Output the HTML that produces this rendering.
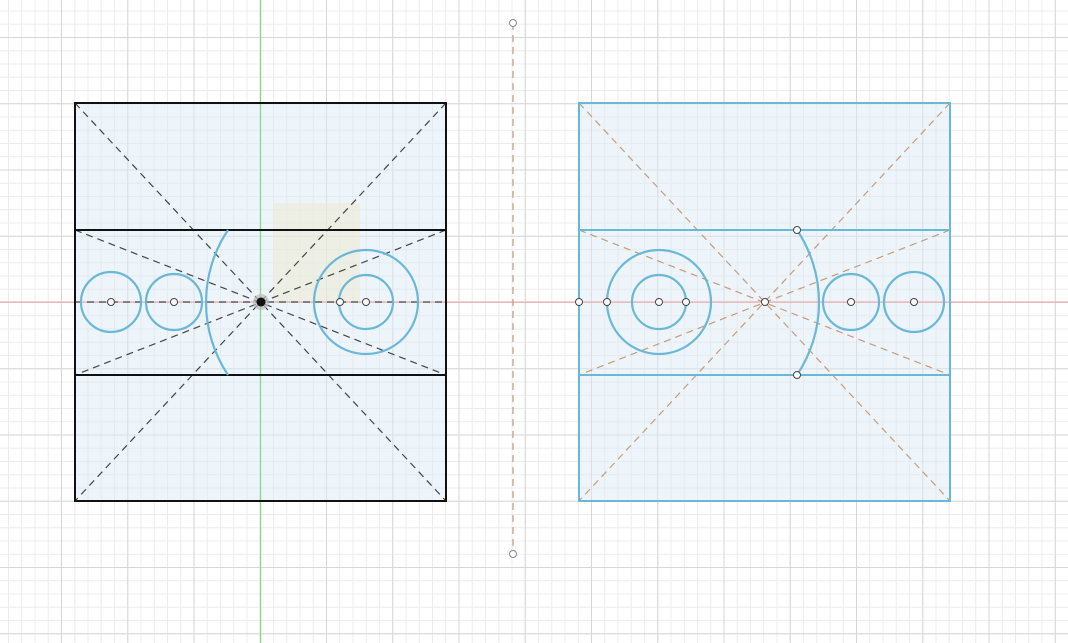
<!DOCTYPE html>
<html><head><style>html,body{margin:0;padding:0;background:#fff}svg{display:block}</style></head>
<body>
<svg width="1068" height="643" xmlns="http://www.w3.org/2000/svg">
<defs>
<pattern id="mn" x="-5.25" y="-2.75" width="13.25" height="13.25" patternUnits="userSpaceOnUse">
<path d="M0 0.5H13.25M0.5 0V13.25" stroke="#ececec" stroke-width="1" fill="none"/>
</pattern>
<pattern id="mj" x="61" y="37" width="66.25" height="66.25" patternUnits="userSpaceOnUse">
<path d="M0 0.5H66.25M0.5 0V66.25" stroke="#d6d6d6" stroke-width="1" fill="none"/>
</pattern>
</defs>
<rect width="1068" height="643" fill="url(#mn)"/>
<rect width="1068" height="643" fill="url(#mj)"/>
<rect x="75" y="103" width="371" height="398" fill="#dcecf8" fill-opacity="0.5"/>
<rect x="579" y="103" width="371" height="398" fill="#dcecf8" fill-opacity="0.5"/>
<rect x="273" y="203" width="87" height="99" fill="#ece9d6" fill-opacity="0.6"/>
<line x1="0" y1="302" x2="1068" y2="302" stroke="#f0a0a0" stroke-width="1"/>
<line x1="260.5" y1="0" x2="260.5" y2="643" stroke="#86dc86" stroke-width="1.3"/>
<g stroke="#444" stroke-width="1.2" stroke-dasharray="7,5" fill="none">
<line x1="75" y1="103" x2="446" y2="501"/>
<line x1="446" y1="103" x2="75" y2="501"/>
<line x1="75" y1="230" x2="446" y2="375"/>
<line x1="446" y1="230" x2="75" y2="375"/>
<line x1="75" y1="302" x2="446" y2="302"/>
</g>
<g stroke="#c89a78" stroke-width="1.2" stroke-dasharray="7,5" fill="none">
<line x1="579" y1="103" x2="950" y2="501"/>
<line x1="950" y1="103" x2="579" y2="501"/>
<line x1="579" y1="230" x2="950" y2="375"/>
<line x1="950" y1="230" x2="579" y2="375"/>
<line x1="513" y1="23" x2="513" y2="554"/>
</g>
<g stroke="#111" stroke-width="2" fill="none">
<rect x="75" y="103" width="371" height="398"/>
<line x1="75" y1="230" x2="446" y2="230"/>
<line x1="75" y1="375" x2="446" y2="375"/>
</g>
<g stroke="#6ab8d8" stroke-width="2" fill="none">
<rect x="579" y="103" width="371" height="398"/>
<line x1="579" y1="230" x2="950" y2="230"/>
<line x1="579" y1="375" x2="950" y2="375"/>
</g>
<g stroke="#6ab8d8" stroke-width="2.2" fill="none">
<circle cx="111" cy="302" r="30"/>
<circle cx="174" cy="302" r="28"/>
<circle cx="366" cy="302" r="52"/>
<circle cx="366" cy="302" r="27"/>
<path d="M228 230 A130.5 130.5 0 0 0 228 375"/>
<circle cx="659" cy="302" r="52"/>
<circle cx="659" cy="302" r="27"/>
<circle cx="851" cy="302" r="28"/>
<circle cx="914" cy="302" r="30"/>
<path d="M797 230 A130.5 130.5 0 0 1 797 375"/>
</g>
<g stroke="#444" stroke-width="1" fill="#fff">
<circle cx="111" cy="302" r="3.5"/>
<circle cx="174" cy="302" r="3.5"/>
<circle cx="340" cy="302" r="3.5"/>
<circle cx="366" cy="302" r="3.5"/>
<circle cx="579" cy="302" r="3.5"/>
<circle cx="607" cy="302" r="3.5"/>
<circle cx="659" cy="302" r="3.5"/>
<circle cx="686" cy="302" r="3.5"/>
<circle cx="765" cy="302" r="3.5"/>
<circle cx="851" cy="302" r="3.5"/>
<circle cx="914" cy="302" r="3.5"/>
<circle cx="797" cy="230" r="3.5"/>
<circle cx="797" cy="375" r="3.5"/>
<circle cx="513" cy="23" r="3.5" stroke="#888"/>
<circle cx="513" cy="554" r="3.5" stroke="#888"/>
</g>
<circle cx="261" cy="302" r="8" fill="#bbb" fill-opacity="0.7"/>
<circle cx="261" cy="302" r="4.5" fill="#111"/>
</svg>
</body></html>
